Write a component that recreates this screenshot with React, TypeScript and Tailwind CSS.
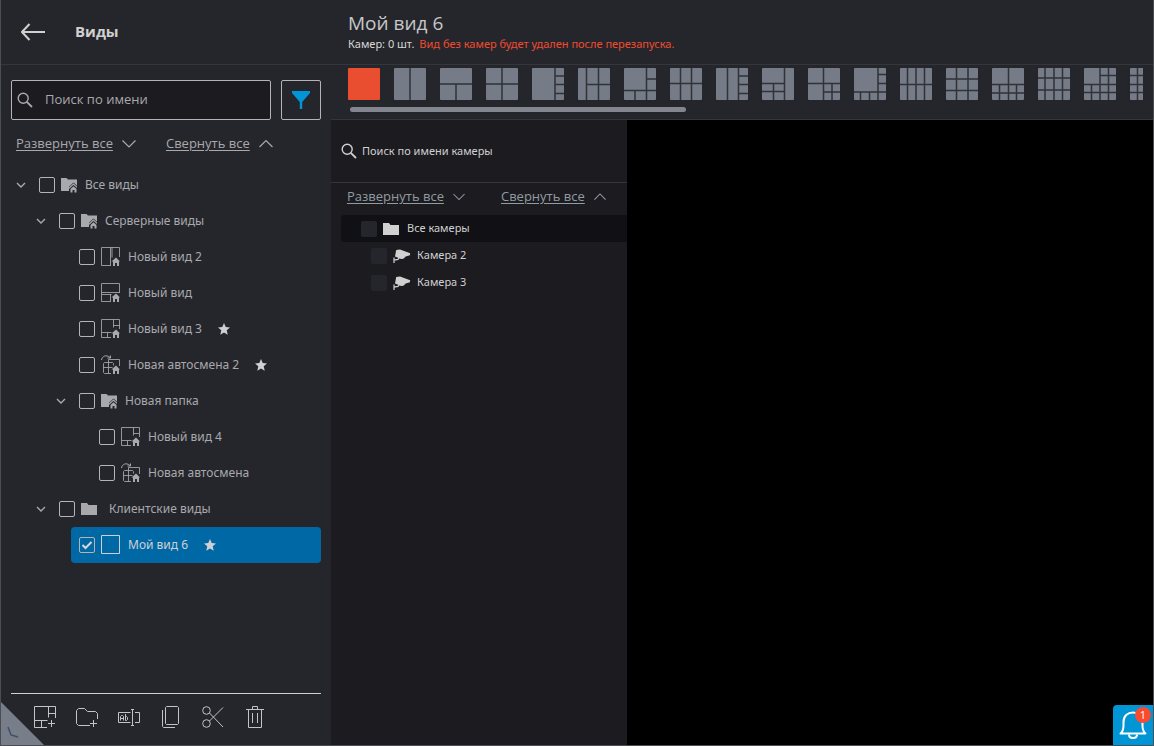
import React, { useState } from 'react';

type IconKind = 'folderHome' | 'folder' | 'split' | 'rows' | 'mixed' | 'auto' | 'single';

interface TreeNode {
  id: string;
  level: number;
  label: string;
  icon: IconKind;
  expandable?: boolean;
  starred?: boolean;
}

const TREE: TreeNode[] = [
  { id: 'all', level: 0, label: 'Все виды', icon: 'folderHome', expandable: true },
  { id: 'server', level: 1, label: 'Серверные виды', icon: 'folderHome', expandable: true },
  { id: 'view-2', level: 2, label: 'Новый вид 2', icon: 'split' },
  { id: 'view', level: 2, label: 'Новый вид', icon: 'rows' },
  { id: 'view-3', level: 2, label: 'Новый вид 3', icon: 'mixed', starred: true },
  { id: 'auto-2', level: 2, label: 'Новая автосмена 2', icon: 'auto', starred: true },
  { id: 'new-folder', level: 2, label: 'Новая папка', icon: 'folderHome', expandable: true },
  { id: 'view-4', level: 3, label: 'Новый вид 4', icon: 'mixed' },
  { id: 'auto', level: 3, label: 'Новая автосмена', icon: 'auto' },
  { id: 'client', level: 1, label: 'Клиентские виды', icon: 'folder', expandable: true },
  { id: 'my-6', level: 2, label: 'Мой вид 6', icon: 'single', starred: true },
];

const INDENT = ['ml-0', 'ml-5', 'ml-10', 'ml-15'];

// Dividing lines of every layout on a 32x32 tile
const LAYOUTS = [
  '',
  'M16 0V32',
  'M0 16H32M16 16V32',
  'M16 0V32M0 16H32',
  'M23 0V32M23 8H32M23 16.5H32M23 25.5H32',
  'M8.5 0V32M20.5 0V32M8.5 16.5H32',
  'M22.5 0V32M0 22.5H32M22.5 11H32M11 22.5V32',
  'M10.5 0V32M21.5 0V32M0 15.5H32',
  'M11.5 0V32M22.5 0V32M22.5 8H32M22.5 16.5H32M22.5 25.5H32',
  'M22.5 0V32M0 15.5H22.5M0 23.5H22.5M11.5 15.5V32',
  'M15.5 0V32M0 15.5H32M15.5 24H32M24 15.5V32',
  'M24 0V32M0 24H32M24 6.5H32M24 15.5H32M6.5 24V32M15.5 24V32',
  'M7.5 0V32M16 0V32M24.5 0V32M0 16.5H32',
  'M10.5 0V32M22 0V32M0 11H32M0 22.5H32',
  'M0 16.5H32M16.5 0V32M0 25H32M7.5 16.5V32M24.5 16.5V32',
  'M7 0V32M16 0V32M24.5 0V32M0 10H32M0 22H32',
  'M16 0V32M0 16.5H32M16 7.5H32M24.5 0V32M0 24.5H32M7.5 16.5V32',
  'M7.5 0V32M16 0V32M24.5 0V32M0 7.5H32M0 16.5H32M0 24.5H32',
];

const LayoutTile: React.FC<{ lines: string; active: boolean }> = ({ lines, active }) => (
  <svg width="32" height="32" viewBox="0 0 32 32" className="block">
    <rect width="32" height="32" rx="1" fill={active ? '#e94e31' : '#757b87'} />
    <path d={lines} stroke="#303238" strokeWidth="1.5" fill="none" />
  </svg>
);

const Chevron: React.FC<{ up?: boolean; size: number }> = ({ up, size }) => (
  <svg width={size} height={size} viewBox="0 0 14 14" fill="none" stroke="currentColor" strokeWidth="1.2">
    <path d={up ? 'M.5 10L7 3.500l6.500 6.500' : 'M.5 3.500L7 10l6.500-6.500'} />
  </svg>
);

const SearchIcon: React.FC = () => (
  <svg width="16" height="16" viewBox="0 0 16 16" fill="none" stroke="currentColor" strokeWidth="1.4" className="shrink-0">
    <circle cx="6.2" cy="6.2" r="5" />
    <path d="M9.8 9.8L15 15" strokeWidth="1.8" />
  </svg>
);

const Star: React.FC = () => (
  <svg width="12" height="12" viewBox="0 0 12 12" fill="#d0d0d4" className="ml-4 shrink-0">
    <path d="M6 0l1.7 4.1 4.3.3-3.3 2.9 1 4.4L6 9.4l-3.7 2.3 1-4.4L0 4.4l4.3-.3z" />
  </svg>
);

const FolderIcon: React.FC<{ home?: boolean }> = ({ home }) => (
  <svg width="16" height="16" viewBox="0 0 16 16" fill="currentColor" className="shrink-0">
    {home ? (
      <>
        <path d="M0 1h5.500L7 2.500h9v6.200l-3.500-3.200L8 9.700V14H0z" />
        <path d="M8 11.300l4.500-4.200L16 10.400" stroke="currentColor" strokeWidth="1.200" fill="none" />
        <path d="M9.500 12l3-2.700L15.500 12v3.500h-2v-2.500h-2v2.500h-2z" />
      </>
    ) : (
      <path d="M0 2h6l1.500 2H16v10H0z" />
    )}
  </svg>
);

const VIEW_LINES: Record<string, string> = {
  single: 'M.5.5h18v18H.5z',
  split: 'M10 18.500H.500V.500h18V10M9.500.500v18M11 .500v10',
  rows: 'M10 18.500H.500V.500h18V10M.500 9.500h18M.500 11.500h10M9.500 11v7.500',
  mixed: 'M10 18.500H.500V.500h18V10M12.500.500v8M12.500 6.500h6M.500 13.500h10M6.500 13.500v5',
  auto: 'M10 18.500H3.500l-1-1v-9l1-1h8l1 1v2M7.500 4.500v14M2.500 12.500h9M7.500 4.500h11V11',
};

const ViewIcon: React.FC<{ kind: IconKind }> = ({ kind }) => {
  if (kind === 'folder' || kind === 'folderHome') {
    return <FolderIcon home={kind === 'folderHome'} />;
  }
  return (
    <svg width="19" height="20" viewBox="0 0 19 20" fill="none" stroke="currentColor" className="shrink-0">
      <path d={VIEW_LINES[kind]} strokeOpacity={kind === 'single' ? 1 : 0.85} />
      {kind === 'auto' && <path d="M.5 5C1 1.500 5-1 9 2.500M9.500.500v2.500H6.500" />}
      {kind !== 'single' && (
        <path d="M10.500 14.500l4.500-4 4 4h-1V19h-2v-3h-2v3h-2v-4.500z" fill="currentColor" stroke="none" />
      )}
    </svg>
  );
};

const CameraIcon: React.FC = () => (
  <svg width="18" height="16" viewBox="0 0 18 16" className="shrink-0" fill="currentColor">
    <path d="M3.200 2L7 1.600l10.200 3.600-.3 2-4.200 1.300-2.300 2.200-2.400.2-6-2.400z" />
    <path d="M1 9.500V15M1 12.200l4-.8 1.500-2" stroke="currentColor" strokeWidth="1.200" fill="none" />
  </svg>
);

const TOOLS = [
  {
    name: 'Создать вид',
    art: <path d="M13 21.500H.500V.500h21V12M14.500.500v11M14.500 7.500h7M.500 14.500h13M7.500 14.500v7M17.500 14v7M14 17.500h7" />,
  },
  {
    name: 'Создать папку',
    art: <path d="M14 19.500H2.500l-2-2v-13l2-2h6l3 3h8l2 2V13M17.500 14v7M14 17.500h7" />,
  },
  {
    name: 'Переименовать',
    art: (
      <>
        <path d="M12.500 6.500H.500v10h12M17 6.500h4.500v10H17M14.500 3.500v16M13 3.500h3M13 19.500h3" />
        <path d="M2.500 14.500v-4l1-1h1l1 1v4M2.500 12.500h3M7.500 8v6.500h1l1-1v-2l-1-1h-1" />
      </>
    ),
  },
  {
    name: 'Копировать',
    art: <path d="M6.500.500h11l1 1v16l-1 1h-11l-1-1v-16zM2.500 4v16.500l1 1H15" />,
  },
  {
    name: 'Вырезать',
    art: (
      <>
        <circle cx="4.500" cy="4.500" r="3.800" />
        <circle cx="4.500" cy="17.500" r="3.800" />
        <path d="M7.500 7L21 21M7.500 15L21 1.500" />
      </>
    ),
  },
  {
    name: 'Удалить',
    art: <path d="M2 3.500h18M8.500 3.500v-3h5v3M4.500 3.500v18h13v-18M8.500 7v10M13.500 7v10" />,
  },
];

const ToggleLinks: React.FC<{ size: number }> = ({ size }) => (
  <>
    <button className="flex items-center gap-[9px]">
      <span className="underline underline-offset-2">Развернуть все</span>
      <Chevron size={size} />
    </button>
    <button className="flex items-center gap-[9px]">
      <span className="underline underline-offset-2">Свернуть все</span>
      <Chevron size={size} up />
    </button>
  </>
);

interface RowProps {
  node: TreeNode;
  checked: boolean;
  onToggle: () => void;
}

const TreeRow: React.FC<RowProps> = ({ node, checked, onToggle }) => (
  <li className={`flex h-9 items-center ${INDENT[node.level]}`}>
    <div className="flex w-5 shrink-0 justify-center">
      {node.expandable && (
        <button aria-label="Свернуть">
          <svg width="10" height="10" viewBox="0 0 10 10" fill="none" stroke="currentColor" strokeWidth="1.4">
            <path d="M1 3l4 4 4-4" />
          </svg>
        </button>
      )}
    </div>
    <div className={`flex h-full grow items-center rounded-sm pl-2 ${checked ? 'bg-[#0069a5] text-[#d0d0d4]' : ''}`}>
      <span className="relative mr-1.5 block size-4 shrink-0">
        <input
          id={node.id}
          type="checkbox"
          checked={checked}
          onChange={onToggle}
          className="block size-4 appearance-none rounded-xs border border-[#b4b4b8]"
        />
        {checked && (
          <svg width="16" height="16" viewBox="0 0 16 16" fill="none" stroke="#d8d8dc" strokeWidth="2" className="pointer-events-none absolute inset-0">
            <path d="M3.500 8l3 3 6-6" />
          </svg>
        )}
      </span>
      <span className={node.icon === 'folder' ? 'w-5 shrink-0' : 'shrink-0'}>
        <ViewIcon kind={node.icon} />
      </span>
      <label htmlFor={node.id} className="ml-2 whitespace-nowrap">{node.label}</label>
      {node.starred && <Star />}
    </div>
  </li>
);

const CAMERAS = ['Камера 2', 'Камера 3'];

const App: React.FC = () => {
  const [checkedIds, setCheckedIds] = useState<string[]>(['my-6']);
  const [layout, setLayout] = useState(0);

  const toggle = (id: string) => {
    setCheckedIds((ids) => (ids.includes(id) ? ids.filter((x) => x !== id) : [...ids, id]));
  };

  return (
    <div className="relative flex h-screen overflow-hidden border-r border-b border-l border-[#4c4d52] bg-[#25262b] font-['Open_Sans','Noto_Sans',sans-serif] text-[13px] text-[#a9a9ad]">
      <aside className="flex w-[330px] shrink-0 flex-col">
        <header className="flex h-[65px] shrink-0 items-center border-b border-[#35363b] pl-5 text-[#d0d0d0]">
          <button aria-label="Назад">
            <svg width="24" height="18" viewBox="0 0 24 18" fill="none" stroke="currentColor" strokeWidth="2">
              <path d="M8.500 1L1 9l7.500 8M1 9h23" />
            </svg>
          </button>
          <h1 className="ml-[30px] pb-0.5 text-[15px] font-bold">Виды</h1>
        </header>

        <div className="flex min-h-0 grow flex-col px-2.5 pt-[15px]">
          <div className="flex gap-2.5">
            <div className="flex h-10 grow items-center rounded-xs border border-[#b4b4b8] bg-[#1c1b20] pl-[5px]">
              <SearchIcon />
              <input
                type="text"
                aria-label="Поиск по имени"
                placeholder="Поиск по имени"
                className="ml-3 min-w-0 grow bg-transparent outline-none placeholder:text-[#a9a9ad]"
              />
            </div>
            <button aria-label="Фильтр" className="flex size-10 items-center justify-center rounded-xs border border-[#b4b4b8]">
              <svg width="20" height="20" viewBox="0 0 20 20" fill="#0095d5">
                <path d="M1 1h18v2L11.200 12v7H8.800v-7L1 3z" />
              </svg>
            </button>
          </div>

          <div className="flex h-[47px] shrink-0 items-center gap-[30px] pl-[5px]">
            <ToggleLinks size={14} />
          </div>

          <ul className="font-['Noto_Sans','Open_Sans',sans-serif] text-xs">
            {TREE.map((node) => (
              <TreeRow key={node.id} node={node} checked={checkedIds.includes(node.id)} onToggle={() => toggle(node.id)} />
            ))}
          </ul>

          <div className="mt-auto flex h-[52px] shrink-0 gap-5 border-t border-[#d0d0d0] pt-3 pl-[23px] text-[#c4c4c6]">
            {TOOLS.map((tool) => (
              <button key={tool.name} aria-label={tool.name} className="size-[22px]">
                <svg width="22" height="22" viewBox="0 0 22 22" fill="none" stroke="currentColor">
                  {tool.art}
                </svg>
              </button>
            ))}
          </div>
        </div>
      </aside>

      <main className="flex min-w-0 grow flex-col">
        <header className="flex h-[65px] shrink-0 flex-col border-b border-[#35363b] pt-[9px] pl-[17px]">
          <h2 className="text-[19px] leading-7 text-[#c8c8ca]">Мой вид 6</h2>
          <p className="font-['Noto_Sans','Open_Sans',sans-serif] text-[11px] leading-[14px] text-[#d8d8d8]">
            Камер: 0 шт. <span className="ml-0.5 text-[#f04b31]">Вид без камер будет удален после перезапуска.</span>
          </p>
        </header>

        <section className="h-[55px] shrink-0 border-b border-[#35363b] pt-[3px] pr-2.5 pl-[17px]">
          <div className="flex gap-3.5 overflow-hidden">
            {LAYOUTS.map((lines, i) => (
              <button key={i} aria-label={`Раскладка ${i + 1}`} className="shrink-0" onClick={() => setLayout(i)}>
                <LayoutTile lines={lines} active={layout === i} />
              </button>
            ))}
          </div>
          <div className="mt-[7px] ml-0.5 h-[5px] w-[336px] rounded-full bg-[#84868f]" />
        </section>

        <div className="flex min-h-0 grow">
          <section className="flex w-[296px] shrink-0 flex-col bg-[#1c1b20] font-['Noto_Sans','Open_Sans',sans-serif] text-[11px] text-[#d0d0d0]">
            <div className="flex h-[63px] shrink-0 items-center border-b border-[#35363b] pl-2.5">
              <SearchIcon />
              <input
                type="text"
                aria-label="Поиск по имени камеры"
                placeholder="Поиск по имени камеры"
                className="ml-[5px] min-w-0 grow bg-transparent outline-none placeholder:text-[#d0d0d0]"
              />
            </div>
            <div className="mb-1 flex h-7 shrink-0 items-center gap-9 pl-4 font-['Open_Sans','Noto_Sans',sans-serif] text-[13px] text-[#929ba2]">
              <ToggleLinks size={12} />
            </div>
            <ul className="ml-2.5">
              <li className="flex h-[27px] items-center rounded-l-sm bg-[#111014] pl-5">
                <input id="cam-all" type="checkbox" className="mr-1.5 size-4 appearance-none rounded-xs bg-[#25262b]" />
                <FolderIcon />
                <label htmlFor="cam-all" className="ml-2 pb-px">Все камеры</label>
              </li>
              {CAMERAS.map((name) => (
                <li key={name} className="flex h-[27px] items-center pl-[30px]">
                  <input id={name} type="checkbox" className="mr-1.5 size-4 appearance-none rounded-xs bg-[#25262b]" />
                  <CameraIcon />
                  <label htmlFor={name} className="ml-1.5 pb-px">{name}</label>
                </li>
              ))}
            </ul>
          </section>
          <section className="grow bg-black" />
        </div>
      </main>

      <svg width="43" height="43" viewBox="0 0 43 43" className="absolute bottom-0 left-0">
        <path d="M0 0l43 43H0z" fill="#777d89" />
        <path d="M7 25l3 8 7 2" stroke="#3f4f66" strokeWidth="1.500" fill="none" />
      </svg>

      <button aria-label="Уведомления" className="absolute right-0 bottom-0 size-10 rounded-tl-sm bg-[#0095d5]">
        <svg width="40" height="40" viewBox="0 0 40 40" fill="none" stroke="#fff" strokeWidth="2">
          <path d="M7.500 28.500c2.500-2 3-4 3-8V17c0-6 4-9.500 9.500-9.500S29.500 11 29.500 17v3.500c0 4 .5 6 3 8z" strokeLinejoin="round" />
          <path d="M16 29.500c0 2.200 1.800 3.500 4 3.500s4-1.300 4-3.500" />
        </svg>
        <span className="absolute top-0.5 right-0.5 flex size-4 items-center justify-center rounded-full bg-[#fb4b2f] text-[11px] text-white">1</span>
      </button>
    </div>
  );
};

export default App;
